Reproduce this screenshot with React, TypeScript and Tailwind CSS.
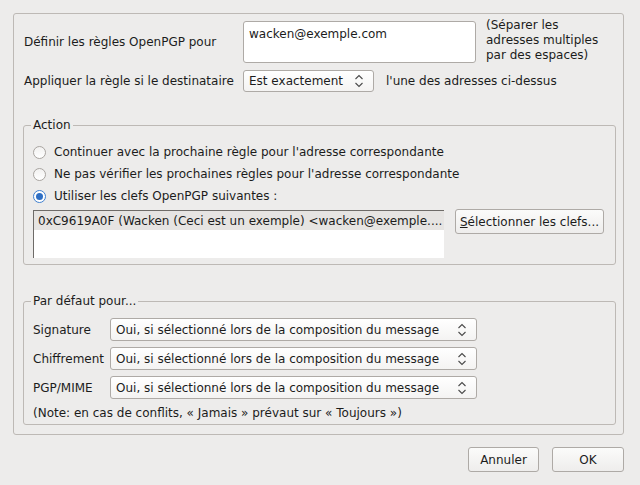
import React from "react";

const font = { fontFamily: '"DejaVu Sans", "Liberation Sans", sans-serif' };

function UpDown() {
  return (
    <svg width="10" height="14" viewBox="0 0 10 14" className="shrink-0">
      <path d="M1.5 5 L5 1.5 L8.5 5" fill="none" stroke="#4a4a4a" strokeWidth="1.1" />
      <path d="M1.5 9 L5 12.5 L8.5 9" fill="none" stroke="#4a4a4a" strokeWidth="1.1" />
    </svg>
  );
}

function Combo({ label, className }: { label: string; className: string }) {
  return (
    <div
      className={`flex items-center justify-between rounded-[3px] border border-[#aeaaa6] bg-gradient-to-b from-[#ffffff] to-[#f4f3f2] pl-[5px] pr-[9px] ${className}`}
    >
      <span className="whitespace-nowrap">{label}</span>
      <UpDown />
    </div>
  );
}

function Radio({ checked, label }: { checked?: boolean; label: string }) {
  return (
    <div className="flex h-[22px] items-center gap-[8px]">
      {checked ? (
        <div className="flex h-[13px] w-[13px] items-center justify-center rounded-full border border-[#3f7fcf] bg-white">
          <div className="h-[7px] w-[7px] rounded-full bg-[#2f6fc4]" />
        </div>
      ) : (
        <div className="h-[13px] w-[13px] rounded-full border border-[#a9a5a1] bg-gradient-to-b from-[#f2f1f0] to-[#ffffff]" />
      )}
      <span className="whitespace-nowrap">{label}</span>
    </div>
  );
}

function Group({ title, className, children }: { title: string; className: string; children: React.ReactNode }) {
  return (
    <div className={`relative ml-[9px] w-[593px] rounded-[3px] border border-[#bdb9b5] ${className}`}>
      <span className="absolute left-[7px] top-[-9px] bg-[#edeceb] px-[2px] leading-[16px]">{title}</span>
      {children}
    </div>
  );
}

function Button({ children, className }: { children: React.ReactNode; className: string }) {
  return (
    <div
      className={`flex h-[25px] items-center justify-center rounded-[3px] border border-[#aeaaa6] bg-gradient-to-b from-[#fbfbfa] to-[#eeedec] ${className}`}
    >
      {children}
    </div>
  );
}

export default function App() {
  return (
    <div className="h-[485px] w-[640px] bg-[#edeceb] pt-[13px] text-[12px] text-[#1c1c1c]" style={font}>
      <div className="ml-[13px] h-[422px] w-[611px] rounded-[3px] border border-[#bdb9b5] pt-[7px]">
        <div className="flex items-start pl-[10px]">
          <div className="flex h-[42px] w-[219px] items-center whitespace-nowrap">Définir les règles OpenPGP pour</div>
          <div className="h-[42px] w-[233px] rounded-[3px] border border-[#aeaaa6] bg-white px-[5px] pt-[3px]">
            wacken@exemple.com
          </div>
          <div className="ml-[10px] mt-[-3px] leading-[15px]">
            (Séparer les
            <br />
            adresses multiples
            <br />
            par des espaces)
          </div>
        </div>
        <div className="mt-[7px] flex items-center pl-[10px]">
          <div className="w-[219px] whitespace-nowrap">Appliquer la règle si le destinataire</div>
          <Combo label="Est exactement" className="h-[22px] w-[131px]" />
          <div className="ml-[12px] whitespace-nowrap">l'une des adresses ci-dessus</div>
        </div>

        <Group title="Action" className="mt-[33px] h-[140px]">
          <div className="pl-[9px] pt-[15px]">
            <Radio label="Continuer avec la prochaine règle pour l'adresse correspondante" />
            <Radio label="Ne pas vérifier les prochaines règles pour l'adresse correspondante" />
            <Radio checked label="Utiliser les clefs OpenPGP suivantes :" />
            <div className="mt-[3px] flex items-start">
              <div className="h-[48px] w-[411px] border-l border-t border-[#6e6b68] border-b-[#f6f5f4] border-r-[#f6f5f4] bg-white">
                <div className="flex h-[19px] items-center whitespace-nowrap bg-[#e6e4e2] pl-[4px]">
                  0xC9619A0F (Wacken (Ceci est un exemple) &lt;wacken@exemple....
                </div>
              </div>
              <Button className="ml-[11px] mt-[-1px] h-[25px] w-[149px]">
                <span>
                  <span className="underline">S</span>électionner les clefs...
                </span>
              </Button>
            </div>
          </div>
        </Group>

        <Group title="Par défaut pour..." className="mt-[36px] h-[124px]">
          <div className="flex flex-col gap-[6px] pl-[9px] pt-[16px]">
            {["Signature", "Chiffrement", "PGP/MIME"].map((l) => (
              <div key={l} className="flex items-center">
                <div className="w-[77px] whitespace-nowrap">{l}</div>
                <Combo label="Oui, si sélectionné lors de la composition du message" className="h-[23px] w-[367px]" />
              </div>
            ))}
            <div className="whitespace-nowrap leading-[16px]">
              (Note: en cas de conflits, « Jamais » prévaut sur « Toujours »)
            </div>
          </div>
        </Group>
      </div>
      <div className="mt-[12px] flex justify-end gap-[13px] pr-[16px]">
        <Button className="w-[71px]">Annuler</Button>
        <Button className="w-[72px]">OK</Button>
      </div>
    </div>
  );
}
